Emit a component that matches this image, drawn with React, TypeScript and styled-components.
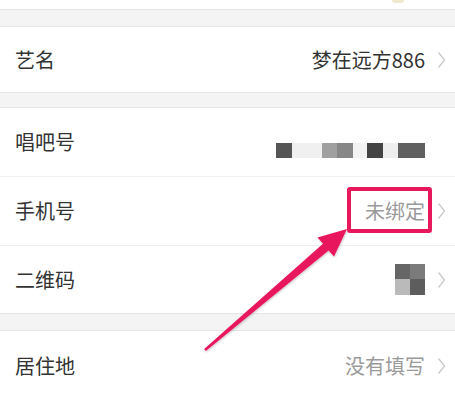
import React from "react";
import styled, { createGlobalStyle } from "styled-components";

const Global = createGlobalStyle`
  html, body { margin: 0; padding: 0; background: #ffffff; }
  body { font-family: "Noto Sans CJK SC", "Noto Sans", sans-serif; }
`;

const Page = styled.div`
  position: relative;
  width: 455px;
  height: 398px;
  overflow: hidden;
  background: #f4f4f4;
  display: flex;
  flex-direction: column;
`;

const TopStub = styled.div`
  position: relative;
  height: 9px;
  background: #ffffff;
  border-bottom: 1px solid #e4e4e4;
  flex: none;
`;

const CutIcon = styled.div`
  position: absolute;
  left: 392px;
  top: 0;
  width: 12px;
  height: 3px;
  border-radius: 0 0 3px 3px;
  background: #ece9cf;
`;

const Gap = styled.div<{ $h: number }>`
  height: ${(p) => p.$h}px;
  flex: none;
`;

const Group = styled.div`
  background: #ffffff;
  border-top: 1px solid #e4e4e4;
  border-bottom: 1px solid #e4e4e4;
  display: flex;
  flex-direction: column;
  flex: none;
`;

const Row = styled.div<{ $h: number; $sep?: boolean }>`
  height: ${(p) => p.$h}px;
  display: flex;
  align-items: center;
  padding: 0 8px 0 15px;
  border-top: ${(p) => (p.$sep ? "1px solid #efefef" : "none")};
  box-sizing: content-box;
`;

const Label = styled.span`
  font-size: 20px;
  color: #333333;
  flex: 1;
  line-height: 1;
`;

const Value = styled.span<{ $muted?: boolean }>`
  font-size: 20px;
  line-height: 1;
  color: ${(p) => (p.$muted ? "#9a9a9a" : "#333333")};
`;

const ChevronBox = styled.span<{ $hidden?: boolean }>`
  width: 10px;
  margin-left: 12px;
  display: flex;
  align-items: center;
  visibility: ${(p) => (p.$hidden ? "hidden" : "visible")};
`;

const Mosaic = styled.div`
  display: flex;
  height: 15px;
  margin-top: 17px;
`;

const Tile = styled.div<{ $w: number; $c: string }>`
  width: ${(p) => p.$w}px;
  height: 100%;
  background: ${(p) => p.$c};
`;

const QrGrid = styled.div`
  display: grid;
  grid-template-columns: 15px 15px;
  grid-template-rows: 15px 16px;
`;

const Highlight = styled.div`
  position: absolute;
  left: 347px;
  top: 187px;
  width: 85px;
  height: 46px;
  box-sizing: border-box;
  border: 4px solid #e8185c;
  border-radius: 3px;
`;

const ArrowLayer = styled.svg`
  position: absolute;
  left: 0;
  top: 0;
  width: 455px;
  height: 398px;
  pointer-events: none;
`;

const Chevron = ({ hidden }: { hidden?: boolean }) => (
  <ChevronBox $hidden={hidden}>
    <svg width="9" height="18" viewBox="0 0 9 18">
      <polyline points="1.5,1.5 7.5,9 1.5,16.5" fill="none" stroke="#cbcbcb" strokeWidth="1.4" />
    </svg>
  </ChevronBox>
);

const mosaic: [number, string][] = [
  [16, "#555555"],
  [30, "#f0f0f0"],
  [15, "#a0a0a0"],
  [16, "#878787"],
  [14, "#f3f3f3"],
  [16, "#444444"],
  [15, "#eeeeee"],
  [27, "#606060"],
];

export default function App() {
  return (
    <>
      <Global />
      <Page>
        <TopStub>
          <CutIcon />
        </TopStub>
        <Gap $h={16} />
        <Group>
          <Row $h={65}>
            <Label>艺名</Label>
            <Value>梦在远方886</Value>
            <Chevron />
          </Row>
        </Group>
        <Gap $h={14} />
        <Group>
          <Row $h={68}>
            <Label>唱吧号</Label>
            <Mosaic>
              {mosaic.map(([w, c], i) => (
                <Tile key={i} $w={w} $c={c} />
              ))}
            </Mosaic>
            <Chevron hidden />
          </Row>
          <Row $h={68} $sep>
            <Label>手机号</Label>
            <Value $muted>未绑定</Value>
            <Chevron />
          </Row>
          <Row $h={67} $sep>
            <Label>二维码</Label>
            <QrGrid>
              <Tile $w={15} $c="#666666" />
              <Tile $w={15} $c="#7b7b7b" />
              <Tile $w={15} $c="#bababa" />
              <Tile $w={15} $c="#5d5d5d" />
            </QrGrid>
            <Chevron />
          </Row>
        </Group>
        <Gap $h={16} />
        <Group>
          <Row $h={70}>
            <Label>居住地</Label>
            <Value $muted>没有填写</Value>
            <Chevron />
          </Row>
        </Group>
        <Highlight />
        <ArrowLayer viewBox="0 0 455 398">
          <defs>
            <filter id="sh" x="-10%" y="-10%" width="120%" height="120%">
              <feDropShadow dx="0.5" dy="1" stdDeviation="1" floodColor="#000" floodOpacity="0.25" />
            </filter>
          </defs>
          <polygon
            filter="url(#sh)"
            fill="#e8185c"
            points="347,229 334,256.5 328.6,250.4 205.8,350.9 204.2,349.1 323,243.8 317.5,237.5"
          />
        </ArrowLayer>
      </Page>
    </>
  );
}
